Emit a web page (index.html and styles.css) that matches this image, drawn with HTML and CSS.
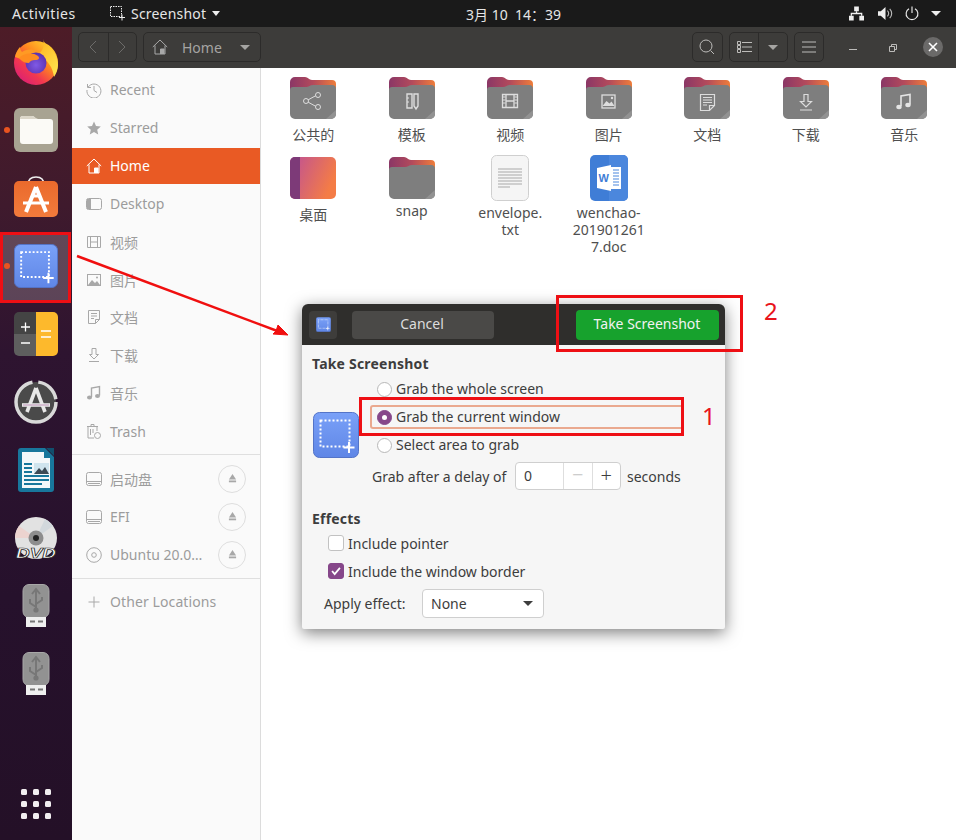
FILE: index.html
```html
<!DOCTYPE html>
<html lang="en">
<head>
    <meta charset="UTF-8">
    <meta name="viewport" content="width=device-width, initial-scale=1.0">
    <title>Take Screenshot</title>
    <link rel="stylesheet" href="styles.css">
</head>
<body>
    <svg class="defs" width="0" height="0">
        <defs>
            <linearGradient id="tabGrad" x1="0" x2="1" y1="0" y2="0">
                <stop offset="0" stop-color="#8a3766"/>
                <stop offset="0.5" stop-color="#b34a5c"/>
                <stop offset="1" stop-color="#ee7d3a"/>
            </linearGradient>
            <linearGradient id="deskGrad" x1="0" x2="1" y1="0" y2="0.4">
                <stop offset="0" stop-color="#bd4f98"/>
                <stop offset="1" stop-color="#f47c46"/>
            </linearGradient>
            <linearGradient id="shotGrad" x1="0" x2="0" y1="0" y2="1">
                <stop offset="0" stop-color="#7aa1f8"/>
                <stop offset="1" stop-color="#5f86e6"/>
            </linearGradient>
            <linearGradient id="bagGrad" x1="0" x2="0" y1="0" y2="1">
                <stop offset="0" stop-color="#ea6a2c"/>
                <stop offset="1" stop-color="#f27b3c"/>
            </linearGradient>
            <linearGradient id="foxBody" x1="0.1" x2="0.9" y1="1" y2="0.1">
                <stop offset="0" stop-color="#d5197f"/>
                <stop offset="0.35" stop-color="#f2384f"/>
                <stop offset="0.65" stop-color="#ff8a1f"/>
                <stop offset="1" stop-color="#ffd42e"/>
            </linearGradient>
            <linearGradient id="foxFlame" x1="0" x2="0.6" y1="0" y2="1">
                <stop offset="0" stop-color="#ffb21f"/>
                <stop offset="1" stop-color="#ffe14a"/>
            </linearGradient>
            <radialGradient id="foxGlobe" cx="0.5" cy="0.6" r="0.6">
                <stop offset="0" stop-color="#7f5ae6"/>
                <stop offset="1" stop-color="#5a2fae"/>
            </radialGradient>
            <clipPath id="calcClip"><rect width="44" height="44" rx="5"/></clipPath>

            <symbol id="folder" viewBox="0 0 46 42">
                <path d="M0 5a5 5 0 0 1 5-5h10c3 0 4 3 7 3h20a4 4 0 0 1 4 4v10H0z" fill="url(#tabGrad)"/>
                <path d="M0 13a3 3 0 0 1 3-3h13c3 0 4-2 7-2h19a4 4 0 0 1 4 4v25a5 5 0 0 1-5 5H5a5 5 0 0 1-5-5z" fill="#7e7e7e"/>
                <path d="M46 33v4a5 5 0 0 1-5 5h-5z" fill="#929292"/>
            </symbol>
            <symbol id="shotFrame" viewBox="0 0 46 46">
                <rect x="0.5" y="0.5" width="45" height="45" rx="6" fill="url(#shotGrad)" stroke="#5474c8"/>
                <rect x="7.5" y="8.5" width="29" height="26" fill="none" stroke="#fff" stroke-width="2" stroke-dasharray="2 2"/>
                <path d="M36 30v11M30.500 35.500h11" stroke="#fff" stroke-width="2"/>
            </symbol>

            <symbol id="i-recent" viewBox="0 0 16 16"><path d="M2.200 5A7 7 0 1 1 1 8M8 4v4.500l3 2M1.500 2v3.500H5" fill="none" stroke="currentColor"/></symbol>
            <symbol id="i-star" viewBox="0 0 16 16"><path d="M8 1.500l2 4.500 4.800.5-3.600 3.200 1 4.800L8 12.100l-4.200 2.400 1-4.800L1.200 6.500 6 6z" fill="currentColor"/></symbol>
            <symbol id="i-home" viewBox="0 0 16 16"><path d="M.8 8L8 1l7.200 7M3 6.500V15h10V6.500M8.500 15v-5H12v5" fill="none" stroke="currentColor"/><rect x="9" y="10" width="3" height="5" fill="currentColor"/></symbol>
            <symbol id="i-desktop" viewBox="0 0 16 16"><rect x="0.500" y="2.500" width="15" height="11" rx="2" fill="none" stroke="currentColor"/><path d="M1 3h4v10H1z" fill="currentColor"/></symbol>
            <symbol id="i-film" viewBox="0 0 16 16"><path d="M1.500 2.500h13v11h-13zM4.500 2.500v11M11.500 2.500v11M4.500 8h7" fill="none" stroke="currentColor"/></symbol>
            <symbol id="i-image" viewBox="0 0 16 16"><rect x="1.500" y="2.500" width="13" height="11" fill="none" stroke="currentColor"/><path d="M2 13l4-5 3 3 2-2 3 4z" fill="currentColor"/><circle cx="11" cy="5.500" r="1" fill="currentColor"/></symbol>
            <symbol id="i-doc" viewBox="0 0 16 16"><path d="M2.500 1.500h11v9l-4 4h-7zM9.500 14.500v-4h4M5 4.500h6M5 7h6M5 9.500h3" fill="none" stroke="currentColor"/></symbol>
            <symbol id="i-down" viewBox="0 0 16 16"><path d="M6 1.500h4v6h2.500L8 12 3.500 7.500H6zM3 14.500h10" fill="none" stroke="currentColor"/></symbol>
            <symbol id="i-music" viewBox="0 0 16 16"><path d="M5.500 12V3l8-1.500v9" fill="none" stroke="currentColor" stroke-width="1.400"/><ellipse cx="3.500" cy="12.500" rx="2.500" ry="2" fill="currentColor"/><ellipse cx="11.500" cy="11" rx="2.500" ry="2" fill="currentColor"/></symbol>
            <symbol id="i-trash" viewBox="0 0 16 16"><path d="M1 3.500h11M5 3.500V1.500h3v2M2 3.500V15h6M11 3.500V8M4.500 6v6M7 6v4" fill="none" stroke="currentColor"/><circle cx="11.500" cy="12.500" r="3" fill="none" stroke="currentColor"/></symbol>
            <symbol id="i-drive" viewBox="0 0 16 16"><rect x="0.500" y="1.500" width="15" height="13" rx="2" fill="none" stroke="currentColor"/><path d="M1 10.500h14M2 12.500h12" stroke="currentColor"/></symbol>
            <symbol id="i-disc" viewBox="0 0 16 16"><circle cx="8" cy="8" r="7.300" fill="none" stroke="currentColor"/><circle cx="8" cy="8" r="2.300" fill="none" stroke="currentColor"/></symbol>
            <symbol id="i-plus" viewBox="0 0 16 16"><path d="M8 2.500v11M2.500 8h11" stroke="currentColor"/></symbol>
            <symbol id="i-eject" viewBox="0 0 10 10"><path d="M5 0l4 6H1z" fill="currentColor"/><rect x="1" y="7.200" width="8" height="2" fill="currentColor"/></symbol>
            <symbol id="i-usb" viewBox="0 0 28 44">
                <rect x="1" y="0.500" width="26" height="33" rx="6" fill="#929292" stroke="#a8a8a8"/>
                <path d="M14 6v20M10 10l4-5 4 5M14 23l-6-4v-4M14 20l6-4v-3" fill="none" stroke="#777" stroke-width="2"/>
                <circle cx="14" cy="26" r="2.600" fill="#777"/>
                <rect x="4" y="33" width="20" height="10" fill="#efefef"/>
                <path d="M8 37.500h5M16 37.500h5" stroke="#777" stroke-width="2"/>
            </symbol>
        </defs>
    </svg>

    <header class="topbar">
        <span class="top-activities">Activities</span>
        <span class="top-app">
            <svg class="top-app-icon" viewBox="0 0 15 15"><path d="M.5 .5h11v10H.5z" fill="none" stroke="#eee" stroke-dasharray="1.500 1"/><path d="M12 8.500v6M9 11.500h6" stroke="#eee"/></svg>
            <span class="top-app-name">Screenshot</span>
            <i class="caret caret-light"></i>
        </span>
        <span class="top-clock">3月 10  14：39</span>
        <span class="top-status">
            <svg class="status-icon status-net" viewBox="0 0 16 15"><path d="M5.500 0h5v5h-5zM0 10h5v5H0zM11 10h5v5h-5z" fill="#eee"/><path d="M8 5v3M2.500 10V7.500h11V10" fill="none" stroke="#eee" stroke-width="1.400"/></svg>
            <svg class="status-icon" viewBox="0 0 16 15"><path d="M0 5h3l5-4.500v14L3 10H0z" fill="#eee"/><path d="M10 4.500a4 4 0 0 1 0 6M12.500 2.500a7 7 0 0 1 0 10" fill="none" stroke="#bbb" stroke-width="1.200"/></svg>
            <svg class="status-icon status-power" viewBox="0 0 15 15"><path d="M4.300 2.300a6.300 6.300 0 1 0 6.400 0M7.500 0v7" fill="none" stroke="#eee" stroke-width="1.200"/></svg>
            <i class="caret caret-light caret-wide"></i>
        </span>
    </header>

    <div class="desktop">
        <nav class="dock">
            <div class="dock-item">
                <svg class="dock-icon dock-fox" viewBox="0 0 44 46">
                    <circle cx="22" cy="24" r="22" fill="url(#foxBody)"/>
                    <path d="M29 0c1 5 6 7 10 12 4 5 5 10 5 14 0 5-2 9-4 12-1-9-6-17-16-23 5-3 7-8 5-15z" fill="url(#foxFlame)"/>
                    <path d="M1 18c1-5 3-8 5-10 0 2 1 4 2 5 3-2 7-3 11-2 6 1 10 5 12 10H10z" fill="#ff9a24"/>
                    <circle cx="22" cy="24" r="10.500" fill="url(#foxGlobe)"/>
                    <path d="M5 19c4-5 14-6 19-2 2 2 1 4-3 4-3 0-5 1-6 3-4 0-8-2-10-5z" fill="#ff8d1f"/>
                </svg>
            </div>
            <div class="dock-item running">
                <svg class="dock-icon" viewBox="0 0 44 44">
                    <rect width="44" height="44" rx="6" fill="#a8a392"/>
                    <path d="M6 11a3 3 0 0 1 3-3h9c3 0 3 3 6 3h12a3 3 0 0 1 3 3v19a3 3 0 0 1-3 3H9a3 3 0 0 1-3-3z" fill="#fbfaf6"/>
                    <path d="M6 11a3 3 0 0 1 3-3h9c3 0 3 3 6 3H6z" fill="#dcd7ca"/>
                </svg>
            </div>
            <div class="dock-item">
                <svg class="dock-icon" viewBox="0 0 44 44">
                    <path d="M14 9c0-6 3-8 8-8s8 2 8 8" fill="none" stroke="#eee" stroke-width="1.600"/>
                    <rect y="5" width="44" height="36" rx="5" fill="url(#bagGrad)"/>
                    <path d="M22 11L12 36M22 11l10 25" fill="none" stroke="#fff" stroke-width="4"/>
                    <path d="M9 27h26" stroke="#fff" stroke-width="3"/>
                    <path d="M18 20h8" stroke="#fff" stroke-width="3"/>
                </svg>
            </div>
            <div class="dock-item running active">
                <svg class="dock-icon" viewBox="0 0 46 46"><use href="#shotFrame"/></svg>
            </div>
            <div class="dock-item">
                <svg class="dock-icon" viewBox="0 0 44 44">
                    <g clip-path="url(#calcClip)">
                        <rect width="22" height="22" fill="#444"/>
                        <rect y="22" width="22" height="22" fill="#5e5e5e"/>
                        <rect x="22" width="22" height="44" fill="#fdb92c"/>
                    </g>
                    <path d="M7 15h9M11.500 10.500v9M7 31h9" stroke="#fff" stroke-width="1.300"/>
                    <path d="M27 19h10M27 25h10" stroke="#fff" stroke-width="1.300"/>
                </svg>
            </div>
            <div class="dock-item">
                <svg class="dock-icon" viewBox="0 0 44 44">
                    <circle cx="22" cy="22" r="20" fill="#4a4a4a" stroke="#d9d9d9" stroke-width="3.500" stroke-dasharray="90 6 26 4"/>
                    <path d="M22 8L13 32M22 8l9 24" fill="none" stroke="#e8e8e8" stroke-width="3.600"/>
                    <path d="M8 25h28" stroke="#e8e8e8" stroke-width="3.600"/>
                    <path d="M9 25h26" stroke="#c9a4c4" stroke-width="1.200"/>
                </svg>
            </div>
            <div class="dock-item">
                <svg class="dock-icon dock-writer" viewBox="0 0 36 44">
                    <path d="M3 0h24l9 9v32a3 3 0 0 1-3 3H3a3 3 0 0 1-3-3V3a3 3 0 0 1 3-3z" fill="#18779c"/>
                    <path d="M4 4h22v6h6v30H4z" fill="#f4f8fa"/>
                    <path d="M28 0l8 0v8z" fill="#114f6d"/>
                    <path d="M6 16h8M6 20h8M6 24h8M6 28h25M6 32h25M6 36h18" stroke="#18779c" stroke-width="2"/>
                    <rect x="16" y="15" width="15" height="11" fill="#cfe4ee"/>
                    <path d="M16 26l5-6 3 3 3-4 4 7z" fill="#3c4a55"/>
                </svg>
            </div>
            <div class="dock-item">
                <svg class="dock-icon" viewBox="0 0 44 44">
                    <circle cx="22" cy="22" r="21" fill="#e2e2e2"/>
                    <path d="M22 22L5 10a21 21 0 0 0-4 12z" fill="#ecd3cf"/>
                    <path d="M22 22l17-12a21 21 0 0 0-8-7z" fill="#d2d8dc"/>
                    <circle cx="22" cy="22" r="7.500" fill="#8d8d8d"/>
                    <circle cx="22" cy="22" r="3" fill="#222"/>
                    <text class="dvd-text" x="2" y="42" textLength="40" lengthAdjust="spacingAndGlyphs">DVD</text>
                </svg>
            </div>
            <div class="dock-item">
                <svg class="dock-usb"><use href="#i-usb"/></svg>
            </div>
            <div class="dock-item">
                <svg class="dock-usb"><use href="#i-usb"/></svg>
            </div>
            <div class="dock-item dock-apps">
                <div class="apps-grid">
                    <i></i><i></i><i></i><i></i><i></i><i></i><i></i><i></i><i></i>
                </div>
            </div>
        </nav>

        <div class="window">
            <div class="headerbar">
                <div class="hb-group">
                    <span class="hb-btn hb-nav"><svg viewBox="0 0 8 14"><path d="M7 1L1 7l6 6" fill="none" stroke="#6d6c6a"/></svg></span>
                    <span class="hb-btn hb-nav"><svg viewBox="0 0 8 14"><path d="M1 1l6 6-6 6" fill="none" stroke="#6d6c6a"/></svg></span>
                </div>
                <div class="hb-group hb-path">
                    <svg class="icon-16 hb-home"><use href="#i-home"/></svg>
                    <span class="hb-path-label">Home</span>
                    <i class="caret caret-grey"></i>
                </div>
                <div class="hb-right">
                    <div class="hb-group">
                        <span class="hb-btn"><svg class="hb-svg" viewBox="0 0 16 16"><circle cx="7" cy="7" r="6" fill="none" stroke="#bdbcba"/><path d="M11.500 11.500L15 15" stroke="#bdbcba"/></svg></span>
                    </div>
                    <div class="hb-group">
                        <span class="hb-btn"><svg class="hb-svg" viewBox="0 0 16 16"><path d="M1.500 2.500h3v3h-3zM1.500 6.500h3v3h-3zM1.500 10.500h3v3h-3zM6 3.500h10M6 8h10M6 12.500h10" fill="none" stroke="#bdbcba"/></svg></span>
                        <span class="hb-btn"><i class="caret caret-grey"></i></span>
                    </div>
                    <div class="hb-group">
                        <span class="hb-btn"><svg class="hb-svg" viewBox="0 0 16 16"><path d="M1 3h14M1 8h14M1 13h14" stroke="#bdbcba"/></svg></span>
                    </div>
                    <div class="wm-controls">
                        <span class="wm-min"></span>
                        <svg class="wm-restore" viewBox="0 0 8 8"><path d="M2.500 2V.5h5v5H6M.5 2.500h5v5h-5z" fill="none" stroke="#bdbcba"/></svg>
                        <span class="wm-close"><svg viewBox="0 0 10 10"><path d="M1 1l8 8M9 1l-8 8" stroke="#fff" stroke-width="1.600"/></svg></span>
                    </div>
                </div>
            </div>

            <div class="window-body">
                <aside class="sidebar">
                    <ul class="side-list">
                        <li class="side-row"><svg class="icon-16"><use href="#i-recent"/></svg>Recent</li>
                        <li class="side-row"><svg class="icon-16"><use href="#i-star"/></svg>Starred</li>
                        <li class="side-row selected"><svg class="icon-16"><use href="#i-home"/></svg>Home</li>
                        <li class="side-row"><svg class="icon-16"><use href="#i-desktop"/></svg>Desktop</li>
                        <li class="side-row"><svg class="icon-16"><use href="#i-film"/></svg>视频</li>
                        <li class="side-row"><svg class="icon-16"><use href="#i-image"/></svg>图片</li>
                        <li class="side-row"><svg class="icon-16"><use href="#i-doc"/></svg>文档</li>
                        <li class="side-row"><svg class="icon-16"><use href="#i-down"/></svg>下载</li>
                        <li class="side-row"><svg class="icon-16"><use href="#i-music"/></svg>音乐</li>
                        <li class="side-row"><svg class="icon-16"><use href="#i-trash"/></svg>Trash</li>
                    </ul>
                    <ul class="side-list side-list-sep">
                        <li class="side-row"><svg class="icon-16"><use href="#i-drive"/></svg>启动盘<span class="eject"><svg viewBox="0 0 10 10"><use href="#i-eject"/></svg></span></li>
                        <li class="side-row"><svg class="icon-16"><use href="#i-drive"/></svg>EFI<span class="eject"><svg viewBox="0 0 10 10"><use href="#i-eject"/></svg></span></li>
                        <li class="side-row"><svg class="icon-16"><use href="#i-disc"/></svg>Ubuntu 20.0…<span class="eject"><svg viewBox="0 0 10 10"><use href="#i-eject"/></svg></span></li>
                    </ul>
                    <ul class="side-list side-list-sep">
                        <li class="side-row side-other"><svg class="icon-16"><use href="#i-plus"/></svg>Other Locations</li>
                    </ul>
                </aside>

                <main class="files">
                    <div class="file">
                        <svg class="file-icon" viewBox="0 0 46 42"><use href="#folder"/><path d="M16 24l11-6M16 24l11 6" stroke="#ddd"/><circle cx="16" cy="24" r="2.500" fill="#7e7e7e" stroke="#ddd"/><circle cx="28" cy="18" r="2.500" fill="#7e7e7e" stroke="#ddd"/><circle cx="28" cy="30" r="2.500" fill="#7e7e7e" stroke="#ddd"/></svg>
                        <span class="file-name cjk">公共的</span>
                    </div>
                    <div class="file">
                        <svg class="file-icon" viewBox="0 0 46 42"><use href="#folder"/><path d="M18 17h5v14h-5zM25 17h4v12l-2 3-2-3z" fill="none" stroke="#ddd" stroke-width="1.400"/><path d="M18 21h2M18 25h2" stroke="#ddd"/></svg>
                        <span class="file-name cjk">模板</span>
                    </div>
                    <div class="file">
                        <svg class="file-icon" viewBox="0 0 46 42"><use href="#folder"/><path d="M15.500 17.500h15v13h-15zM19 17.500v13M27 17.500v13M19 24h8" fill="none" stroke="#ddd" stroke-width="1.300"/><path d="M16 20h2.500M16 23h2.500M16 26h2.500M27.500 20H30M27.500 23H30M27.500 26H30" stroke="#ddd"/></svg>
                        <span class="file-name cjk">视频</span>
                    </div>
                    <div class="file">
                        <svg class="file-icon" viewBox="0 0 46 42"><use href="#folder"/><rect x="16" y="18" width="13" height="13" fill="none" stroke="#ddd" stroke-width="1.300"/><path d="M16.500 29l4-5 3 2.500 2-2 3 4.500z" fill="#ddd"/><circle cx="26" cy="21" r="1.200" fill="#ddd"/></svg>
                        <span class="file-name cjk">图片</span>
                    </div>
                    <div class="file">
                        <svg class="file-icon" viewBox="0 0 46 42"><use href="#folder"/><path d="M16.500 17.500h14v11l-5 5h-9zM25.500 33.500v-5h5M19 20.500h9M19 23h9M19 25.500h9M19 28h4" fill="none" stroke="#ddd" stroke-width="1.200"/></svg>
                        <span class="file-name cjk">文档</span>
                    </div>
                    <div class="file">
                        <svg class="file-icon" viewBox="0 0 46 42"><use href="#folder"/><path d="M21 17.500h4v7h3.500L23 30l-5.500-5.500H21zM17 33h12" fill="none" stroke="#ddd" stroke-width="1.200"/></svg>
                        <span class="file-name cjk">下载</span>
                    </div>
                    <div class="file">
                        <svg class="file-icon" viewBox="0 0 46 42"><use href="#folder"/><path d="M20 29V19l9-1.500v10" fill="none" stroke="#e4e4e4" stroke-width="1.600"/><ellipse cx="18" cy="30" rx="2.700" ry="2.200" fill="#e4e4e4"/><ellipse cx="27" cy="28" rx="2.700" ry="2.200" fill="#e4e4e4"/></svg>
                        <span class="file-name cjk">音乐</span>
                    </div>

                    <div class="file">
                        <svg class="file-icon" viewBox="0 0 46 42"><path d="M0 5a5 5 0 0 1 5-5h36a5 5 0 0 1 5 5v32a5 5 0 0 1-5 5H5a5 5 0 0 1-5-5z" fill="url(#deskGrad)"/><path d="M0 5a5 5 0 0 1 5-5h5v42H5a5 5 0 0 1-5-5z" fill="#7d3a78"/></svg>
                        <span class="file-name cjk">桌面</span>
                    </div>
                    <div class="file">
                        <svg class="file-icon" viewBox="0 0 46 42"><use href="#folder"/></svg>
                        <span class="file-name">snap</span>
                    </div>
                    <div class="file">
                        <svg class="file-tall" viewBox="0 0 38 46"><rect x="0.500" y="0.500" width="37" height="45" rx="5" fill="#f5f5f5" stroke="#cfcfcf"/><path d="M7 14h24M7 17h24M7 20h24M7 23h24M7 26h24M7 29h24M7 32h12" stroke="#a9a9a9"/></svg>
                        <span class="file-name">envelope.<br>txt</span>
                    </div>
                    <div class="file">
                        <svg class="file-tall" viewBox="0 0 38 46"><rect width="38" height="46" rx="5" fill="#3f7dd6"/><path d="M19 0h14a5 5 0 0 1 5 5v36a5 5 0 0 1-5 5H19z" fill="#4b87dd"/><path d="M20 12h11v22H20z" fill="#fff"/><path d="M23 15h6M23 18h6M23 21h6M23 24h6M23 27h6M23 30h6" stroke="#4b87dd"/><path d="M7 13l14-3v26L7 33z" fill="#fff"/><text class="word-w" x="8.500" y="27">W</text></svg>
                        <span class="file-name">wenchao-<br>201901261<br>7.doc</span>
                    </div>
                </main>
            </div>
        </div>
    </div>

    <section class="dialog">
        <div class="dialog-head">
            <span class="dlg-icon-btn"><svg class="dlg-small-icon" viewBox="0 0 46 46"><use href="#shotFrame"/></svg></span>
            <span class="dlg-cancel">Cancel</span>
            <span class="dlg-take">Take Screenshot</span>
        </div>
        <div class="dialog-body">
            <div class="dlg-title">Take Screenshot</div>
            <div class="grab">
                <svg class="grab-icon" viewBox="0 0 46 46"><use href="#shotFrame"/></svg>
                <div class="grab-options">
                    <label class="option"><i class="radio"></i>Grab the whole screen</label>
                    <label class="option focused"><i class="radio checked"></i>Grab the current window</label>
                    <label class="option"><i class="radio"></i>Select area to grab</label>
                    <div class="delay">
                        <span class="delay-label">Grab after a delay of</span>
                        <span class="spin">
                            <span class="spin-value">0</span>
                            <span class="spin-btn spin-off">−</span>
                            <span class="spin-btn">+</span>
                        </span>
                        <span>seconds</span>
                    </div>
                </div>
            </div>
            <div class="dlg-title dlg-effects">Effects</div>
            <label class="check-row"><i class="check"></i>Include pointer</label>
            <label class="check-row"><i class="check checked"><svg viewBox="0 0 16 16"><path d="M3.500 8l3 3.500 6-7" fill="none" stroke="#fff" stroke-width="2"/></svg></i>Include the window border</label>
            <div class="effect-row">
                <span class="effect-label">Apply effect:</span>
                <span class="combo">None<i class="caret caret-dark"></i></span>
            </div>
        </div>
    </section>

    <!-- annotations drawn on top of the screenshot -->
    <svg class="arrow" viewBox="0 0 956 840">
        <path d="M77 256L280 332" stroke="#f00f0f" stroke-width="2.500" fill="none"/>
        <path d="M288 335l-15-1 3-3 2-6z" fill="#f00f0f" stroke="#f00f0f"/>
    </svg>
    <span class="mark mark-dock"></span>
    <span class="mark mark-window"></span>
    <span class="mark mark-take"></span>
    <span class="mark-num mark-num-1">1</span>
    <span class="mark-num mark-num-2">2</span>
</body>
</html>
```

FILE: styles.css
```css
* {
    box-sizing: border-box;
}
body {
    margin: 0;
    width: 956px;
    height: 840px;
    overflow: hidden;
    position: relative;
    font-family: "Noto Sans", "Noto Sans CJK SC", sans-serif;
    font-size: 14px;
    background: #fff;
    color: #3d3d3d;
    display: flex;
    flex-direction: column;
}
i {
    font-style: normal;
}
ul {
    list-style: none;
    margin: 0;
    padding: 0;
}
.defs {
    position: absolute;
}
svg {
    display: block;
}

/* carets */
.caret {
    display: inline-block;
    width: 0;
    height: 0;
    border-left: 4px solid transparent;
    border-right: 4px solid transparent;
    border-top: 5px solid #ccc;
}
.caret-light {
    border-top-color: #eee;
}
.caret-wide {
    border-left-width: 5px;
    border-right-width: 5px;
}
.caret-grey {
    border-left-width: 5px;
    border-right-width: 5px;
    border-top-color: #a5a4a2;
}
.caret-dark {
    border-left-width: 5px;
    border-right-width: 5px;
    border-top-color: #3d3d3d;
}

/* top bar */
.topbar {
    height: 27px;
    flex: none;
    background: #1a1a1a;
    color: #e6e6e6;
    display: flex;
    align-items: center;
    position: relative;
    padding-left: 12px;
}
.top-activities {
    width: 98px;
    letter-spacing: 0.55px;
}
.top-app {
    display: flex;
    align-items: center;
}
.top-app-name {
    letter-spacing: 0.2px;
}
.top-app-icon {
    width: 15px;
    height: 15px;
    margin-right: 6px;
}
.top-app .caret {
    margin-left: 6px;
}
.top-clock {
    position: absolute;
    left: 466px;
    white-space: pre;
}
.top-status {
    margin-left: auto;
    display: flex;
    align-items: center;
    gap: 12px;
    padding-right: 15px;
}
.status-icon {
    width: 15px;
    height: 15px;
}
.status-net {
    margin-right: 2px;
}
.status-power {
    width: 14px;
}

/* desktop and dock */
.desktop {
    flex: 1;
    display: flex;
    min-height: 0;
}
.dock {
    width: 72px;
    flex: none;
    padding: 1px 0 2px;
    display: flex;
    flex-direction: column;
    background: linear-gradient(180deg, #4d1c27 0%, #3f1a2d 22%, #2e1430 40%, #26112c 70%, #241027 100%);
}
.dock-item {
    height: 68px;
    flex: none;
    display: flex;
    align-items: center;
    justify-content: center;
    position: relative;
}
.dock-item.running::before {
    content: "";
    position: absolute;
    left: 4px;
    top: 31px;
    width: 6px;
    height: 6px;
    border-radius: 50%;
    background: #e95420;
}
.dock-item.active {
    background: rgba(255, 255, 255, 0.2);
    margin: 0 4px 0 3px;
    justify-content: flex-start;
    padding-left: 11px;
}
.dock-item.active::before {
    left: 1px;
}
.dock-icon {
    width: 44px;
    height: 44px;
}
.dock-fox {
    height: 46px;
}
.dock-writer {
    width: 36px;
}
.dock-usb {
    width: 28px;
    height: 44px;
}
.dvd-text {
    font-family: "Liberation Sans", sans-serif;
    font-size: 15px;
    font-weight: bold;
    font-style: italic;
    fill: #fff;
    stroke: #222;
    stroke-width: 0.7px;
}
.dock-apps {
    margin-top: auto;
}
.apps-grid {
    display: grid;
    grid-template-columns: repeat(3, 6px);
    gap: 6px;
}
.apps-grid i {
    height: 6px;
    border-radius: 1.500px;
    background: #f1eef0;
}

/* file manager window */
.window {
    flex: 1;
    display: flex;
    flex-direction: column;
    min-width: 0;
}
.headerbar {
    height: 41px;
    flex: none;
    background: #3d3c3a;
    display: flex;
    align-items: center;
    padding: 0 0 1px 6px;
    gap: 6px;
}
.hb-group {
    display: flex;
    height: 30px;
    border: 1px solid #2c2b2a;
    border-radius: 5px;
}
.hb-btn {
    width: 28.500px;
    display: flex;
    align-items: center;
    justify-content: center;
}
.hb-btn + .hb-btn {
    border-left: 1px solid #2c2b2a;
}
.hb-nav svg {
    width: 8px;
    height: 14px;
}
.hb-path {
    width: 118px;
    align-items: center;
    padding: 0 10px 0 8px;
    color: #a5a4a2;
}
.hb-home {
    color: #a5a4a2;
}
.hb-path-label {
    margin-left: 6px;
    flex: 1;
}
.hb-right {
    margin-left: auto;
    display: flex;
    align-items: center;
    gap: 6px;
}
.hb-svg {
    width: 16px;
    height: 16px;
}
.wm-controls {
    display: flex;
    align-items: center;
    width: 126px;
    height: 30px;
    padding-left: 19px;
}
.wm-min {
    width: 8px;
    height: 1px;
    background: #bdbcba;
    margin-top: 5px;
}
.wm-restore {
    width: 8px;
    height: 8px;
    margin-left: 32px;
    margin-top: 1px;
}
.wm-close {
    width: 20px;
    height: 20px;
    border-radius: 50%;
    background: #6b6a69;
    margin-left: 26px;
    display: flex;
    align-items: center;
    justify-content: center;
}
.wm-close svg {
    width: 10px;
    height: 10px;
}
.window-body {
    flex: 1;
    display: flex;
    min-height: 0;
}

/* sidebar */
.sidebar {
    width: 189px;
    flex: none;
    background: #fafafa;
    border-right: 1px solid #dcdcdc;
    padding-top: 3px;
    color: #9c9c9c;
}
.side-list-sep {
    border-top: 1px solid #dfdfdf;
    padding-top: 5px;
    margin-top: 4px;
}
.side-row {
    height: 37.900px;
    display: flex;
    align-items: center;
    padding: 0 14px 0 14px;
    white-space: nowrap;
}
.side-row.selected {
    height: 36px;
    margin: 1px 0;
    background: #e95a24;
    color: #fff;
}
.side-other {
    padding-bottom: 2px;
    letter-spacing: 0.1px;
}
.icon-16 {
    width: 16px;
    height: 16px;
    flex: none;
    margin-right: 8px;
    color: #a8a8a8;
}
.selected .icon-16 {
    color: #fff;
}
.eject {
    margin-left: auto;
    width: 28px;
    height: 28px;
    flex: none;
    border: 1px solid #dedede;
    border-radius: 50%;
    display: flex;
    align-items: center;
    justify-content: center;
    color: #a8a8a8;
}
.eject svg {
    width: 9px;
    height: 9px;
}

/* file grid */
.files {
    flex: 1;
    display: grid;
    grid-template-columns: repeat(7, 98.500px);
    grid-auto-rows: 80px;
    padding: 6px 0 0 3px;
    align-content: start;
}
.file {
    display: flex;
    flex-direction: column;
    align-items: center;
    color: #4f4f4f;
}
.file-icon {
    width: 46px;
    height: 42px;
    margin-top: 3px;
    flex: none;
}
.file-tall {
    width: 38px;
    height: 46px;
    margin-top: 1px;
    flex: none;
}
.file-name {
    margin-top: 3px;
    line-height: 17px;
    text-align: center;
}
.file-name.cjk {
    margin-top: 7px;
}
.word-w {
    font-family: "Liberation Sans", sans-serif;
    font-size: 11px;
    font-weight: bold;
    fill: #3f7dd6;
}

/* screenshot dialog */
.dialog {
    position: absolute;
    left: 302px;
    top: 304px;
    width: 423px;
    height: 325px;
    background: #f6f6f6;
    border-radius: 6px 6px 2px 2px;
    box-shadow: 0 4px 16px rgba(0, 0, 0, 0.5);
}
.dialog-head {
    height: 41px;
    background: #2f2e2c;
    border-radius: 6px 6px 0 0;
    display: flex;
    align-items: center;
    padding: 0 6px 0 7px;
}
.dlg-icon-btn {
    width: 28px;
    height: 28px;
    border-radius: 4px;
    background: #3e3d3b;
    display: flex;
    align-items: center;
    justify-content: center;
    margin-right: 15px;
}
.dlg-small-icon {
    width: 15px;
    height: 15px;
}
.dlg-cancel {
    width: 142px;
    height: 28px;
    border-radius: 4px;
    background: #4a4947;
    color: #ddd;
    display: flex;
    align-items: center;
    justify-content: center;
    padding: 0 2px 2px 0;
}
.dlg-take {
    margin-left: auto;
    width: 143px;
    height: 30px;
    border-radius: 4px;
    background: #17a22d;
    color: #f2f2f2;
    display: flex;
    align-items: center;
    justify-content: center;
    padding: 0 1px 2px 0;
}
.dialog-body {
    padding: 9px 10px 0;
}
.dlg-title {
    font-weight: bold;
    height: 20px;
    line-height: 20px;
    letter-spacing: 0.2px;
}
.grab {
    display: flex;
    margin-top: 1px;
}
.grab-icon {
    width: 46px;
    height: 46px;
    margin: 37px 11px 0 1px;
    flex: none;
}
.option {
    height: 24px;
    width: 314px;
    margin: 2px 0 4px;
    padding: 0 0 2px 7px;
    display: flex;
    align-items: center;
    gap: 4px;
    border-radius: 3px;
}
.option.focused {
    box-shadow: inset 0 0 0 2px #eaa98f;
}
.radio {
    width: 15px;
    height: 15px;
    margin-top: 2px;
    border-radius: 50%;
    border: 1px solid #b8b8b8;
    background: #fff;
    display: flex;
    align-items: center;
    justify-content: center;
}
.radio.checked {
    border-color: #86478a;
    background: #86478a;
}
.radio.checked::after {
    content: "";
    width: 5px;
    height: 5px;
    border-radius: 50%;
    background: #fff;
}
.delay {
    display: flex;
    align-items: center;
    gap: 6px;
    margin-top: 5px;
    padding-left: 2px;
    height: 28px;
    white-space: nowrap;
}
.delay-label {
    width: 137px;
}
.spin {
    display: flex;
    width: 106px;
    height: 28px;
    border: 1px solid #cfcfcf;
    border-radius: 4px;
    background: #fff;
}
.spin-value {
    width: 47px;
    padding-left: 8px;
    line-height: 26px;
}
.spin-btn {
    flex: 1;
    border-left: 1px solid #dedede;
    text-align: center;
    font-size: 20px;
    line-height: 24px;
    font-weight: 300;
}
.spin-off {
    color: #c4c4c4;
}
.dlg-effects {
    margin-top: 19px;
}
.check-row {
    height: 28px;
    display: flex;
    align-items: center;
    gap: 4px;
    padding-left: 16px;
}
.check {
    width: 16px;
    height: 16px;
    border-radius: 3px;
    border: 1px solid #c2c2c2;
    background: #fff;
}
.check.checked {
    border-color: #86478a;
    background: #86478a;
}
.check svg {
    width: 14px;
    height: 14px;
}
.effect-row {
    display: flex;
    align-items: center;
    margin-top: 4px;
    padding-left: 12px;
}
.effect-label {
    width: 98px;
}
.combo {
    width: 122px;
    height: 29px;
    border: 1px solid #cfcfcf;
    border-radius: 4px;
    background: #fff;
    display: flex;
    align-items: center;
    justify-content: space-between;
    padding: 0 10px 0 8px;
}

/* red annotations */
.arrow {
    position: absolute;
    left: 0;
    top: 0;
    width: 956px;
    height: 840px;
    pointer-events: none;
}
.mark {
    position: absolute;
    border: 3px solid #ee0f14;
}
.mark-dock {
    left: 0;
    top: 232px;
    width: 71px;
    height: 71px;
}
.mark-window {
    left: 359px;
    top: 397px;
    width: 325px;
    height: 39px;
}
.mark-take {
    left: 556px;
    top: 295px;
    width: 187px;
    height: 57px;
}
.mark-num {
    position: absolute;
    color: #e8141c;
    font-size: 24px;
    line-height: 28px;
}
.mark-num-1 {
    left: 702px;
    top: 402px;
}
.mark-num-2 {
    left: 764px;
    top: 297px;
}
```
